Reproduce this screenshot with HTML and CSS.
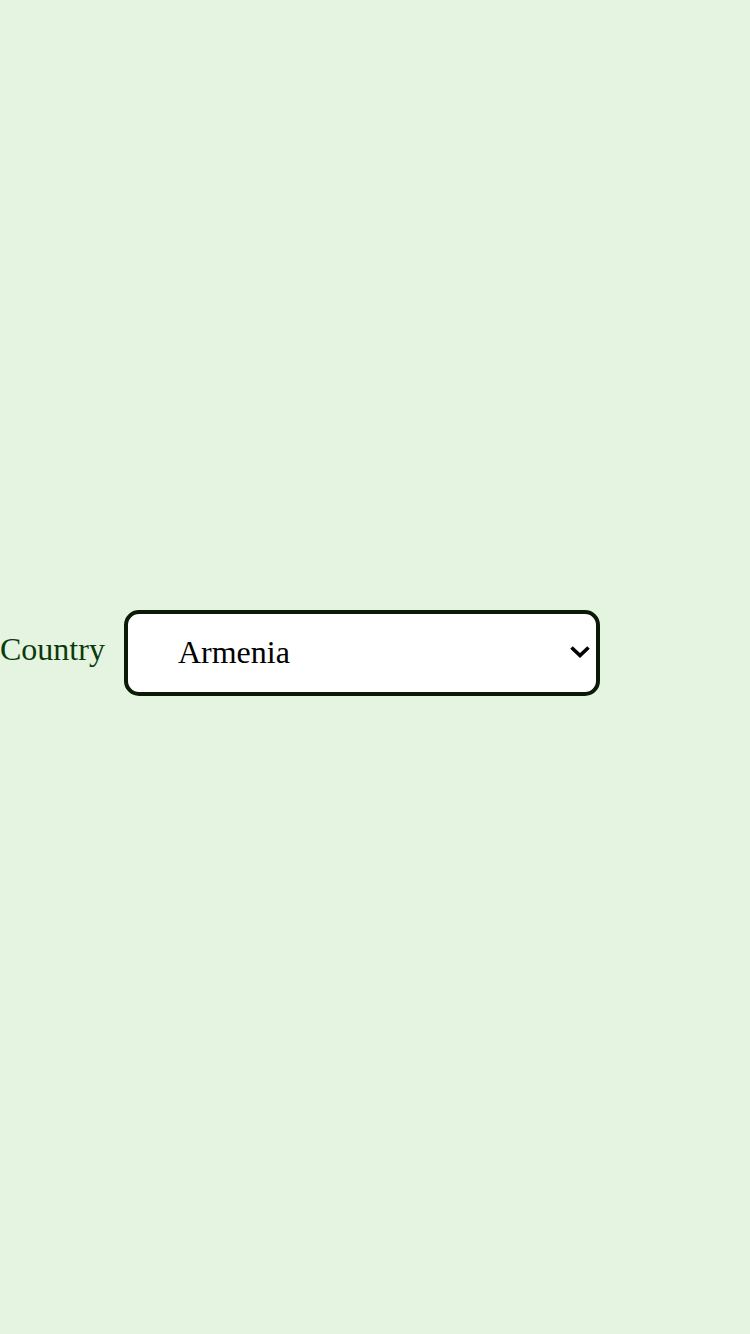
FILE: index.html
```html
<!DOCTYPE html>
<html>
<head>
<meta charset="utf-8">
<link rel="stylesheet" href="styles.css">
</head>
<body>
<div class="page">
  <div class="field">
    <label class="label" for="country">Country</label>
    <div class="select-wrap">
      <select class="select" id="country">
        <option>Armenia</option>
      </select>
      <svg class="chevron" width="22" height="14" viewBox="0 0 22 14" aria-hidden="true">
        <path d="M2.5 2.5 L11 10.5 L19.5 2.5" fill="none" stroke="#000" stroke-width="3.6"/>
      </svg>
    </div>
  </div>
</div>
</body>
</html>
```
FILE: styles.css
```css
html, body {
  margin: 0;
  padding: 0;
  background: #e4f4e0;
}
.page {
  min-height: 1334px;
  padding-top: 610px;
  box-sizing: border-box;
}
.field {
  display: flex;
  align-items: center;
  gap: 19px;
}
.label {
  font-family: "Liberation Serif", serif;
  font-size: 32px;
  color: #0b3a0b;
  margin-top: -8px;
}
.select-wrap {
  position: relative;
  display: flex;
}
.select {
  -webkit-appearance: none;
  appearance: none;
  width: 476px;
  height: 86px;
  box-sizing: border-box;
  font-family: "Liberation Serif", serif;
  font-size: 32px;
  color: #000;
  background: #fff;
  border: 4px solid #0a1a05;
  border-radius: 15px;
  padding: 0 40px 3px 50px;
  outline: none;
}
.chevron {
  position: absolute;
  right: 9px;
  top: 35px;
  pointer-events: none;
}
```
